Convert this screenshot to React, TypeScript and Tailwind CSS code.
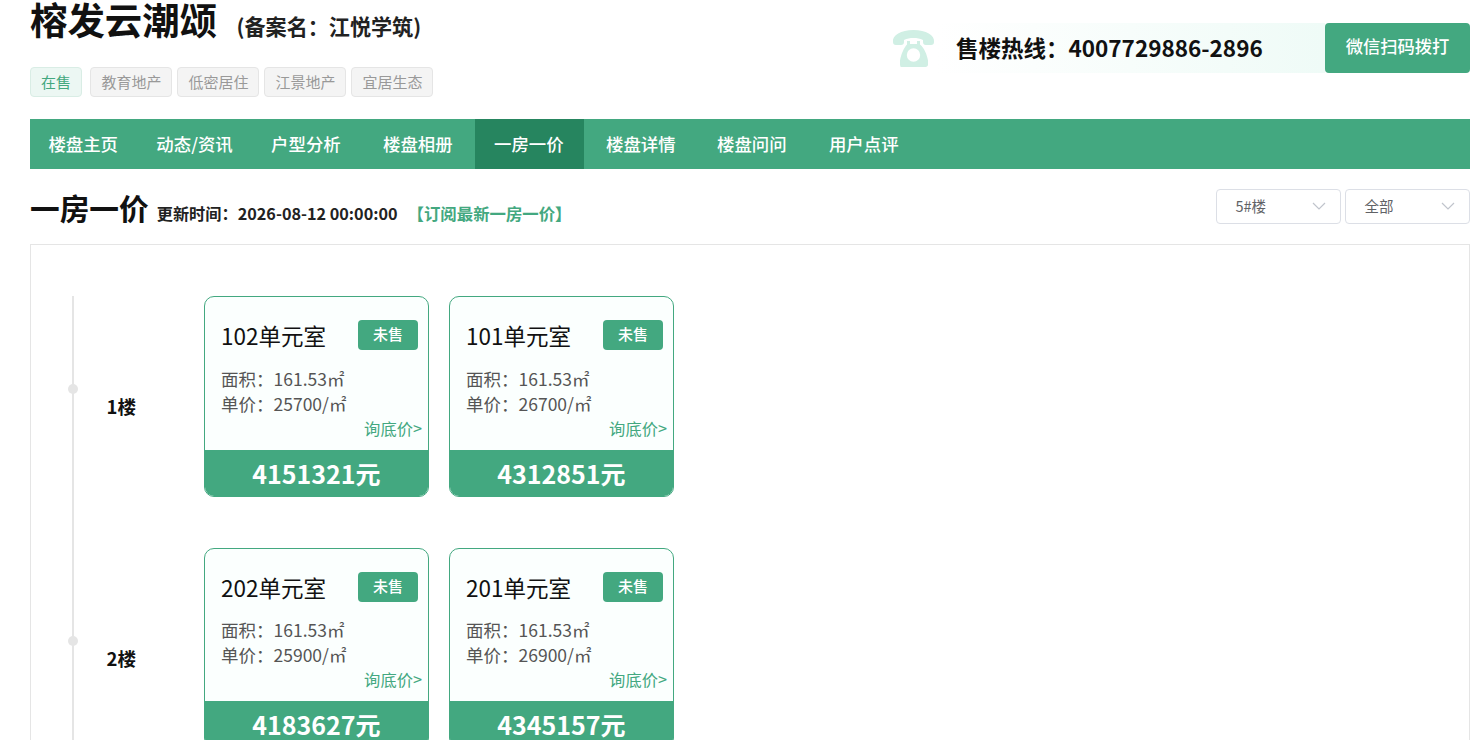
import React from "react";

const green = "bg-[#43a880]";

function Card({ room, status, area, price, total }: { room: string; status: string; area: string; price: string; total: string }) {
  return (
    <div className="w-[225px] h-[200.6px] rounded-[10px] border border-[#43a880] bg-[#fbfffe] overflow-hidden flex flex-col">
      <div className="flex-1 relative pl-4 pr-[10px] pt-[23px]">
        <div className="flex justify-between items-start h-[30px]">
          <div className="text-[22.5px] leading-[30.6px] text-[#111]">{room}</div>
          <div className={`${green} w-[60px] h-[30px] rounded-[4px] text-white text-[15px] font-medium leading-[28px] text-center`}>{status}</div>
        </div>
        <div className="mt-[15.3px] text-[17.5px] leading-[25px] text-[#555]">
          <div>面积：{area}㎡</div>
          <div>单价：{price}/㎡</div>
        </div>
        <div className="absolute right-[6px] top-[118.7px] text-[16.3px] leading-6 text-[#43a880]">询底价&gt;</div>
      </div>
      <div className={`${green} h-[46.2px] text-white text-[25px] font-bold leading-[47px] text-center`}>{total}</div>
    </div>
  );
}

function Floor({ name, cards }: { name: string; cards: { room: string; area: string; price: string; total: string }[] }) {
  return (
    <div className="flex h-[251.2px]">
      <div className="w-[2px] bg-[#e5e5e5] relative">
        <div className="absolute left-[-4px] top-[88px] w-[10px] h-[10px] rounded-full bg-[#e5e5e5]" />
      </div>
      <div className="w-[130px] pl-[32.6px] pt-[95px] text-[18.5px] leading-[30px] font-bold text-[#111]">{name}</div>
      <div className="flex gap-5 items-start">
        {cards.map((c) => (
          <Card key={c.room} status="未售" {...c} />
        ))}
      </div>
    </div>
  );
}

const tags = ["教育地产", "低密居住", "江景地产", "宜居生态"];
const nav: [string, string][] = [
  ["楼盘主页", "ml-0 pl-[18.4px] pr-[19px]"],
  ["动态/资讯", "ml-[0.4px] px-[19px]"],
  ["户型分析", "ml-[0.4px] px-[19px]"],
  ["楼盘相册", "ml-[4.4px] px-[19px]"],
  ["一房一价", "ml-[3.4px] pl-[19px] pr-[20px] bg-[#26855f]"],
  ["楼盘详情", "ml-[3.4px] px-[19px]"],
  ["楼盘问问", "ml-[3.4px] px-[19px]"],
  ["用户点评", "ml-[4.4px] px-[19px]"],
];

export default function App() {
  return (
    <div className="h-[740px] overflow-hidden bg-white pl-[30px] pr-1 text-[#111]" style={{ fontFamily: '"Noto Sans CJK SC","Noto Sans",sans-serif' }}>
      <div className="flex justify-between h-[119px]">
        <div>
          <div className="flex items-baseline h-[67px] -mt-[1px] pb-[1px] box-content">
            <span className="text-[37.4px] leading-[40px] font-bold">榕发云潮颂</span>
            <span className="ml-[19.5px] text-[21.1px] leading-[38px] font-bold text-[#222]">(备案名：江悦学筑)</span>
          </div>
          <div className="flex gap-[5px]">
            <div className="mr-[3px] h-[30px] px-[10px] rounded-[4px] border border-[#d9ede5] bg-[#ecf7f3] text-[#43a880] text-[15px] leading-[28px]">在售</div>
            {tags.map((t) => (
              <div key={t} className="h-[30px] pl-[10.6px] pr-[9.4px] rounded-[4px] border border-[#e5e5e5] bg-[#f4f4f4] text-[#999] text-[15px] leading-[28px]">{t}</div>
            ))}
          </div>
        </div>
        <div className="flex items-start pt-[23px]">
          <svg width="44" height="38" viewBox="0 0 44 38" className="mt-[6px]" fill="#d0efe4">
            <path d="M1 13C0 6 9 1 21.5 1S43 6 42 13c0 2-1 3-3 3h-5c-2 0-3-1-3-3v-2c-3-1.5-6-2-9.5-2s-6.5.5-9.5 2v2c0 2-1 3-3 3H4c-2 0-3-1-3-3z" />
            <path fillRule="evenodd" d="M15 12h3v3h7v-3h3v3.5c4 3 7 10 8 16v4c0 1.5-1 2.5-2.5 2.5h-25C9 38 8 37 8 35.5v-4c1-6 4-13 7-16zM21.5 19.3a6.7 6.7 0 1 0 0 13.4 6.7 6.7 0 0 0 0-13.4z" />
          </svg>
          <div className="h-[50px] w-[389px] pl-5 bg-gradient-to-r from-white to-[#effbf7] text-[22.5px] leading-[49px] font-bold">售楼热线：4007729886-2896</div>
          <div className={`${green} w-[145px] h-[50px] rounded-[4px] text-white text-[17.3px] font-medium leading-[45px] text-center`}>微信扫码拨打</div>
        </div>
      </div>

      <div className={`${green} h-[50px] flex text-white text-[17.4px] leading-[50px] font-medium`}>
        {nav.map(([n, m]) => (
          <div key={n} className={m}>{n}</div>
        ))}
      </div>

      <div className="flex justify-between h-[75px] pt-5">
        <div className="flex items-baseline h-[40px] -mt-[0.5px]">
          <span className="text-[29.7px] leading-[38px] font-bold">一房一价</span>
          <span className="ml-2 text-[16.2px] font-bold text-[#222]">更新时间：2026-08-12 00:00:00</span>
          <span className="ml-[10px] text-[16.4px] font-bold text-[#43a880]">【订阅最新一房一价】</span>
        </div>
        <div className="flex gap-1">
          {["5#楼", "全部"].map((s) => (
            <div key={s} className="w-[125px] h-[35px] rounded-[4px] border border-[#dcdfe6] flex items-center justify-between pl-[18.5px] pr-[13px] pb-[1px] text-[14.5px] text-[#606266]">
              <span>{s}</span>
              <svg width="16" height="16" viewBox="0 0 16 16" fill="none" stroke="#c0c4cc" strokeWidth="1.2"><path d="M2 5l6 6 6-6" /></svg>
            </div>
          ))}
        </div>
      </div>

      <div className="border border-[#e5e5e5] pl-[41px] pt-[51.4px] h-[600px]">
        <Floor
          name="1楼"
          cards={[
            { room: "102单元室", area: "161.53", price: "25700", total: "4151321元" },
            { room: "101单元室", area: "161.53", price: "26700", total: "4312851元" },
          ]}
        />
        <Floor
          name="2楼"
          cards={[
            { room: "202单元室", area: "161.53", price: "25900", total: "4183627元" },
            { room: "201单元室", area: "161.53", price: "26900", total: "4345157元" },
          ]}
        />
      </div>
    </div>
  );
}
